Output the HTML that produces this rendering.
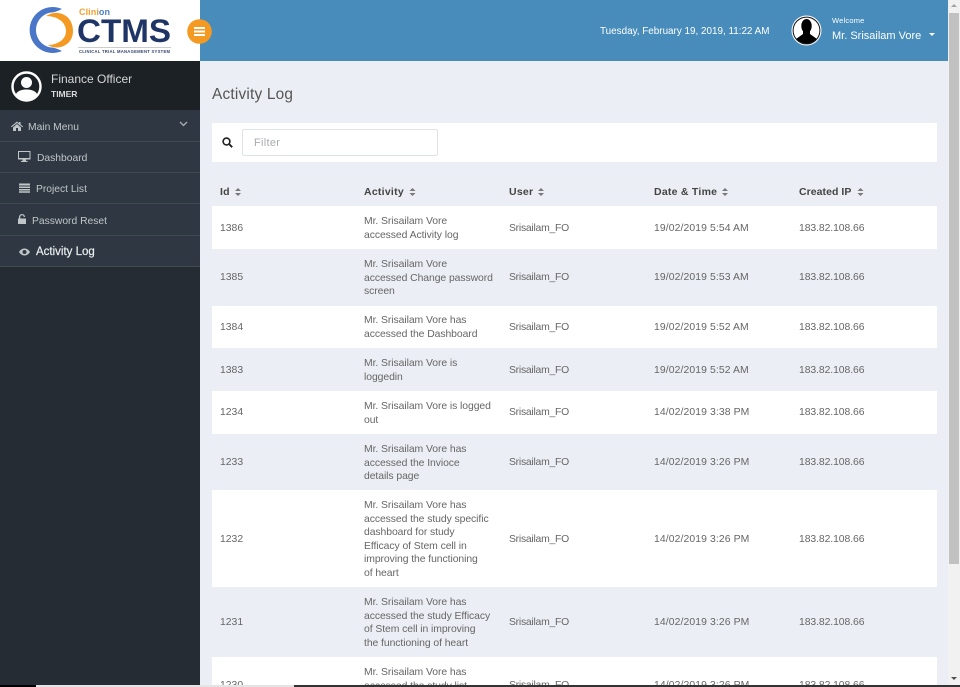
<!DOCTYPE html>
<html><head><meta charset="utf-8">
<style>
html,body{margin:0;padding:0;width:960px;height:687px;overflow:hidden;background:#ebeef4;font-family:"Liberation Sans",sans-serif}
.a{position:absolute;white-space:nowrap}
#page{position:relative;width:960px;height:687px;overflow:hidden}
.nav{position:absolute;left:0;width:200px;background:#2f3842;border-bottom:1px solid #3d4a50}
.t{position:absolute;font-size:10.4px;letter-spacing:0;color:#666;white-space:nowrap;line-height:13.5px;margin-top:1px}
.t[style*="left:364px"]{letter-spacing:-.07px}
.t[style*="left:509px"]{letter-spacing:-.25px}
.t[style*="left:654px"]{letter-spacing:.1px}
.t[style*="left:799px"]{letter-spacing:-.08px}
.h{position:absolute;top:186px;font-size:10.5px;font-weight:bold;letter-spacing:.25px;color:#444;white-space:nowrap;line-height:12px}
.r{position:absolute;left:212px;width:725px}
.n{color:#c0c6c8;font-size:10.3px;letter-spacing:0;margin-top:1px}
</style></head><body><div id="page">

<!-- header -->
<div class="a" style="left:0;top:0;width:200px;height:61px;background:#fff"></div>
<div class="a" style="left:200px;top:0;width:748px;height:61px;background:#478cbb"></div>
<svg class="a" style="left:0;top:0" width="200" height="61" viewBox="0 0 200 61">
<path d="M62 9 A23 23 0 1 0 62 51 Q56 48 52 47.500 C43 47 36 39 36 30 C36 21 43 13 52 12.500 Q56 12 62 9Z" fill="#4a76c8"/>
<path d="M46 16 C51 13 55 12.500 58 13 C67 14 73 21 73 31 C73 40 67 47 57 47.500 C54 47.500 51 47 48 45 C55 45 66 41 66 31 C66 22 57 16 46 16Z" fill="#f49a22"/>
<line x1="78" y1="47.500" x2="171" y2="47.500" stroke="#bbb" stroke-width=".7"/>
<text x="79" y="15" font-family="Liberation Sans" font-weight="bold" font-size="9" textLength="31" fill="#f4a030">Clin<tspan fill="#e8a030">i</tspan><tspan fill="#4a80c8">on</tspan></text>
<text x="77" y="42" font-family="Liberation Sans" font-weight="bold" font-size="32" textLength="94" lengthAdjust="spacingAndGlyphs" fill="#1f3566">CTMS</text>
<text x="79" y="53" font-family="Liberation Sans" font-weight="bold" font-size="4.200" textLength="91" fill="#33456e">CLINICAL TRIAL MANAGEMENT SYSTEM</text>
</svg>
<svg class="a" style="left:187px;top:19px" width="25" height="25" viewBox="0 0 25 25"><circle cx="12.500" cy="12.500" r="12.300" fill="#f49a22"/><path d="M7 8h11v2H7zM7 11.500h11v2H7zM7 15h11v2H7z" fill="#fff"/></svg>
<div class="a" style="left:600px;top:25px;font-size:9.900px;color:#fff;line-height:13px">Tuesday, February 19, 2019, 11:22 AM</div>
<svg class="a" style="left:791px;top:15px" width="31" height="31" viewBox="0 0 31 31"><circle cx="15.500" cy="15.500" r="15" fill="#fff"/><circle cx="15.500" cy="15.500" r="13.400" fill="#fff" stroke="#111" stroke-width="1"/><clipPath id="c1"><circle cx="15.500" cy="15.500" r="13"/></clipPath><g clip-path="url(#c1)"><ellipse cx="15.500" cy="11" rx="5.200" ry="7" fill="#000"/><path d="M12 16v3L5 24v6h21v-6l-7-5v-3z" fill="#000"/></g></svg>
<div class="a" style="left:832px;top:16px;font-size:7.500px;color:#fff;line-height:10px;letter-spacing:.2px">Welcome</div>
<div class="a" style="left:832px;top:29px;font-size:11px;color:#fff;line-height:14px">Mr. Srisailam Vore</div>
<div class="a" style="left:929px;top:33px;width:0;height:0;border-left:3.500px solid transparent;border-right:3.500px solid transparent;border-top:3.500px solid #fff"></div>

<!-- sidebar -->
<div class="a" style="left:0;top:61px;width:200px;height:626px;background:#252c33"></div>
<div class="a" style="left:0;top:61px;width:200px;height:49px;background:#1c2125"></div>
<svg class="a" style="left:11px;top:71px" width="31" height="31" viewBox="0 0 31 31"><circle cx="15.500" cy="15.500" r="14" fill="none" stroke="#fff" stroke-width="2.400"/><clipPath id="c2"><circle cx="15.500" cy="15.500" r="13"/></clipPath><g clip-path="url(#c2)" fill="#fff"><circle cx="15.500" cy="11.500" r="5.500"/><path d="M4 27c0-6 5-8.500 11.500-8.500S27 21 27 27v3H4z"/></g></svg>
<div class="a" style="left:51px;top:71px;font-size:12px;color:#d5d7d8;line-height:16px">Finance Officer</div>
<div class="a" style="left:51px;top:89px;font-size:8.500px;font-weight:bold;color:#d8dadb;line-height:11px">TIMER</div>

<div class="nav" style="top:110px;height:31px"></div>
<div class="nav" style="top:142px;height:30px"></div>
<div class="nav" style="top:173px;height:30px"></div>
<div class="nav" style="top:204px;height:31px"></div>
<div class="nav" style="top:236px;height:30px"></div>

<svg class="a" style="left:11px;top:121px" width="12" height="10" viewBox="0 0 12 10"><path d="M6 .5L0 5.500l.7.8L6 2l5.300 4.300.7-.8L9.500 3.400V1H8v1.200zM2 6.500V10h3V7h2v3h3V6.500L6 3z" fill="#c0c6c8"/></svg>
<div class="a n" style="left:28px;top:120px;line-height:13px">Main Menu</div>
<svg class="a" style="left:179px;top:121px" width="9" height="6" viewBox="0 0 9 6"><path d="M1 1l3.500 3.500L8 1" fill="none" stroke="#aab0b3" stroke-width="1.300"/></svg>

<svg class="a" style="left:18px;top:151px" width="13" height="12" viewBox="0 0 13 12"><path d="M0 0h12.500v8.500H8v1.500h1.500v1H3v-1h1.500V8.500H0zM1 1v6h10.500V1z" fill="#c0c6c8"/></svg>
<div class="a n" style="left:37px;top:151px;line-height:13px">Dashboard</div>

<svg class="a" style="left:19px;top:183px" width="11" height="10" viewBox="0 0 11 10"><path d="M0 .5h11v2H0zM0 3.500h11v1.500H0zM0 6h11v1.500H0zM0 8.200h11v1.500H0z" fill="#c0c6c8"/></svg>
<div class="a n" style="left:36px;top:182px;line-height:13px">Project List</div>

<svg class="a" style="left:18px;top:214px" width="8" height="10" viewBox="0 0 8 10"><path d="M1 4.500V3a3 3 0 0 1 6 0h-1.300a1.700 1.700 0 0 0-3.400 0v1.500H8V10H0V4.500z" fill="#c0c6c8"/></svg>
<div class="a n" style="left:32px;top:214px;line-height:13px">Password Reset</div>

<svg class="a" style="left:19px;top:248px" width="11" height="8" viewBox="0 0 11 8"><path d="M0 4C1.500 1.500 3.500 .5 5.500 .5S9.500 1.500 11 4C9.500 6.500 7.500 7.500 5.500 7.500S1.500 6.500 0 4z" fill="#c0c6c8"/><circle cx="5.500" cy="4" r="2" fill="#2f3842"/></svg>
<div class="a" style="left:36px;top:245px;font-size:11.500px;color:#eceeef;line-height:14px;-webkit-text-stroke:.2px #eceeef">Activity Log</div>

<!-- content -->
<div class="a" style="left:212px;top:86px;font-size:15.400px;color:#555;line-height:18px;letter-spacing:.2px">Activity Log</div>
<div class="a" style="left:212px;top:123px;width:725px;height:39px;background:#fff"></div>
<svg class="a" style="left:222px;top:137px" width="11" height="11" viewBox="0 0 11 11"><circle cx="4.500" cy="4.500" r="3.400" fill="none" stroke="#222" stroke-width="1.600"/><path d="M7 7l3.200 3.200" stroke="#222" stroke-width="1.900"/></svg>
<div class="a" style="left:242px;top:129px;width:194px;height:25px;background:#fff;border:1px solid #dfe2e7;border-radius:2px"></div>
<div class="a" style="left:254px;top:137px;font-size:11px;color:#a9abae;line-height:13px;letter-spacing:.3px">Filter</div>

<!-- table head -->
<div class="h" style="left:220px">Id</div>
<div class="h" style="left:364px">Activity</div>
<div class="h" style="left:509px">User</div>
<div class="h" style="left:654px">Date &amp; Time</div>
<div class="h" style="left:799px;letter-spacing:.05px">Created IP</div>
<svg class="a" style="left:0;top:187px" width="960" height="10"><g fill="#777">
<path d="M235 4l3-3 3 3zM235 6l3 3 3-3z"/>
<path d="M409.500 4l3-3 3 3zM409.500 6l3 3 3-3z"/>
<path d="M538 4l3-3 3 3zM538 6l3 3 3-3z"/>
<path d="M722 4l3-3 3 3zM722 6l3 3 3-3z"/>
<path d="M857.500 4l3-3 3 3zM857.500 6l3 3 3-3z"/></g></svg>

<!-- rows -->
<div class="r" style="top:206px;height:43px;background:#fff"></div>
<div class="r" style="top:306px;height:42px;background:#fff"></div>
<div class="r" style="top:391px;height:43px;background:#fff"></div>
<div class="r" style="top:490px;height:97px;background:#fff"></div>
<div class="r" style="top:657px;height:30px;background:#fff"></div>

<div class="t" style="left:220px;top:221px">1386</div><div class="t" style="left:364px;top:214px">Mr. Srisailam Vore<br>accessed Activity log</div><div class="t" style="left:509px;top:221px">Srisailam_FO</div><div class="t" style="left:654px;top:221px">19/02/2019 5:54 AM</div><div class="t" style="left:799px;top:221px">183.82.108.66</div>

<div class="t" style="left:220px;top:270px">1385</div><div class="t" style="left:364px;top:257px">Mr. Srisailam Vore<br>accessed Change password<br>screen</div><div class="t" style="left:509px;top:270px">Srisailam_FO</div><div class="t" style="left:654px;top:270px">19/02/2019 5:53 AM</div><div class="t" style="left:799px;top:270px">183.82.108.66</div>

<div class="t" style="left:220px;top:320px">1384</div><div class="t" style="left:364px;top:313px">Mr. Srisailam Vore has<br>accessed the Dashboard</div><div class="t" style="left:509px;top:320px">Srisailam_FO</div><div class="t" style="left:654px;top:320px">19/02/2019 5:52 AM</div><div class="t" style="left:799px;top:320px">183.82.108.66</div>

<div class="t" style="left:220px;top:363px">1383</div><div class="t" style="left:364px;top:356px">Mr. Srisailam Vore is<br>loggedin</div><div class="t" style="left:509px;top:363px">Srisailam_FO</div><div class="t" style="left:654px;top:363px">19/02/2019 5:52 AM</div><div class="t" style="left:799px;top:363px">183.82.108.66</div>

<div class="t" style="left:220px;top:405px">1234</div><div class="t" style="left:364px;top:399px">Mr. Srisailam Vore is logged<br>out</div><div class="t" style="left:509px;top:405px">Srisailam_FO</div><div class="t" style="left:654px;top:405px">14/02/2019 3:38 PM</div><div class="t" style="left:799px;top:405px">183.82.108.66</div>

<div class="t" style="left:220px;top:455px">1233</div><div class="t" style="left:364px;top:442px">Mr. Srisailam Vore has<br>accessed the Invioce<br>details page</div><div class="t" style="left:509px;top:455px">Srisailam_FO</div><div class="t" style="left:654px;top:455px">14/02/2019 3:26 PM</div><div class="t" style="left:799px;top:455px">183.82.108.66</div>

<div class="t" style="left:220px;top:532px">1232</div><div class="t" style="left:364px;top:498px">Mr. Srisailam Vore has<br>accessed the study specific<br>dashboard for study<br>Efficacy of Stem cell in<br>improving the functioning<br>of heart</div><div class="t" style="left:509px;top:532px">Srisailam_FO</div><div class="t" style="left:654px;top:532px">14/02/2019 3:26 PM</div><div class="t" style="left:799px;top:532px">183.82.108.66</div>

<div class="t" style="left:220px;top:615px">1231</div><div class="t" style="left:364px;top:595px">Mr. Srisailam Vore has<br>accessed the study Efficacy<br>of Stem cell in improving<br>the functioning of heart</div><div class="t" style="left:509px;top:615px">Srisailam_FO</div><div class="t" style="left:654px;top:615px">14/02/2019 3:26 PM</div><div class="t" style="left:799px;top:615px">183.82.108.66</div>

<div class="t" style="left:220px;top:678px">1230</div><div class="t" style="left:364px;top:665px">Mr. Srisailam Vore has<br>accessed the study list</div><div class="t" style="left:509px;top:678px">Srisailam_FO</div><div class="t" style="left:654px;top:678px">14/02/2019 3:26 PM</div><div class="t" style="left:799px;top:678px">183.82.108.66</div>

<!-- scrollbar -->
<div class="a" style="left:948px;top:0;width:12px;height:687px;background:#f1f1f1"></div>
<div class="a" style="left:949px;top:13px;width:10px;height:551px;background:#c1c1c1"></div>
<div class="a" style="left:951px;top:4px;width:0;height:0;border-left:3px solid transparent;border-right:3px solid transparent;border-bottom:3px solid #a3a3a3"></div>
<div class="a" style="left:951px;top:677px;width:0;height:0;border-left:3px solid transparent;border-right:3px solid transparent;border-top:3px solid #505050"></div>

<!-- bottom strip -->
<div class="a" style="left:0;top:685px;width:960px;height:2px;background:#333"></div>
<div class="a" style="left:0;top:685px;width:36px;height:2px;background:#000"></div>
<div class="a" style="left:36px;top:685px;width:258px;height:2px;background:#e4e4e4"></div>
</div></body></html>
